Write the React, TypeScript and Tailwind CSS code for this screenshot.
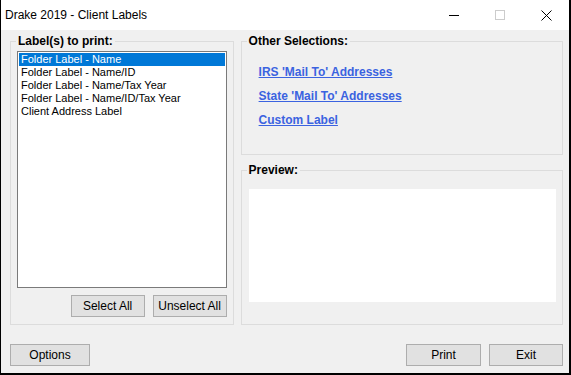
import React from 'react';

const labels = [
  'Folder Label - Name',
  'Folder Label - Name/ID',
  'Folder Label - Name/Tax Year',
  'Folder Label - Name/ID/Tax Year',
  'Client Address Label',
];

const links = ["IRS 'Mail To' Addresses", "State 'Mail To' Addresses", 'Custom Label'];

function WinButton({ children, className = '' }: { children: React.ReactNode; className?: string }) {
  return (
    <button
      className={`h-[22px] border border-[#adadad] bg-[#e1e1e1] text-[12px] text-black leading-none ${className}`}
    >
      {children}
    </button>
  );
}

export default function App() {
  return (
    <div
      className="w-[571px] h-[375px] flex flex-col border-l border-r-2 border-b-2 border-black bg-[#f0f0f0] text-black"
      style={{ fontFamily: '"Liberation Sans", Arial, sans-serif' }}
    >
      {/* title bar */}
      <div className="h-[30px] bg-white flex items-center shrink-0">
        <span className="pl-[4px] text-[12px] flex-1">Drake 2019 - Client Labels</span>
        <div className="flex h-full">
          <div className="w-[46px] flex items-center justify-center">
            <div className="w-[10px] h-px bg-black" />
          </div>
          <div className="w-[46px] flex items-center justify-center">
            <div className="w-[10px] h-[10px] border border-[#cccccc]" />
          </div>
          <div className="w-[46px] flex items-center justify-center">
            <svg width="11" height="11" viewBox="0 0 11 11">
              <path d="M0.5 0.5 L10.5 10.5 M10.5 0.5 L0.5 10.5" stroke="black" strokeWidth="1" />
            </svg>
          </div>
        </div>
      </div>

      {/* body */}
      <div className="flex-1 flex flex-col pl-[9px] pr-[6px] pt-[5px]">
        <div className="flex gap-[7px]">
          {/* left group */}
          <fieldset className="w-[224px] h-[290px] border border-[#dcdcdc]">
            <legend className="ml-[5px] px-[2px] text-[12px] font-bold leading-[13px]">Label(s) to print:</legend>
            <div className="px-[6px] pb-[6px] flex flex-col">
              <div className="mt-[3px] h-[237px] border border-[#7a7a7a] bg-white p-px">
                {labels.map((l, i) => (
                  <div
                    key={l}
                    className={`h-[13px] px-[2px] text-[11px] leading-[13px] ${i === 0 ? 'bg-[#0078d7] text-white' : ''}`}
                  >
                    {l}
                  </div>
                ))}
              </div>
              <div className="mt-[7px] flex justify-end gap-[8px]">
                <WinButton className="w-[74px]">Select All</WinButton>
                <WinButton className="w-[74px]">Unselect All</WinButton>
              </div>
            </div>
          </fieldset>

          {/* right column */}
          <div className="w-[323px] flex flex-col gap-[9px]">
            <fieldset className="h-[120px] border border-[#dcdcdc]">
              <legend className="ml-[5px] px-[2px] text-[12px] font-bold leading-[13px]">Other Selections:</legend>
              <div className="flex flex-col gap-[11px] pt-[18px] pl-[17px]">
                {links.map((l) => (
                  <a key={l} className="text-[12px] font-bold leading-[13px] text-[#3b63e0] underline w-fit">
                    {l}
                  </a>
                ))}
              </div>
            </fieldset>
            <fieldset className="h-[161px] border border-[#dcdcdc]">
              <legend className="ml-[5px] px-[2px] text-[12px] font-bold leading-[13px]">Preview:</legend>
              <div className="mt-[12px] ml-[7px] mr-[6px] h-[113px] bg-white" />
            </fieldset>
          </div>
        </div>

        {/* bottom buttons */}
        <div className="mt-[19px] flex">
          <WinButton className="w-[80px]">Options</WinButton>
          <div className="flex-1" />
          <WinButton className="w-[75px]">Print</WinButton>
          <WinButton className="w-[74px] ml-[8px]">Exit</WinButton>
        </div>
      </div>
    </div>
  );
}
